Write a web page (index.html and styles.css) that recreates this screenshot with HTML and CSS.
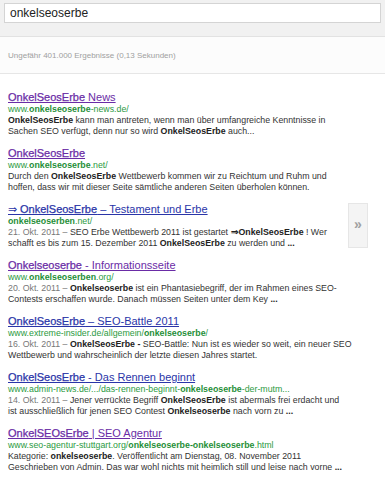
FILE: index.html
```html
<!DOCTYPE html>
<html lang="de">
<head>
<meta charset="utf-8">
<title>onkelseoserbe - Suche</title>
<link rel="stylesheet" href="styles.css">
</head>
<body>
<header class="searchbar">
  <div class="searchbox">onkelseoserbe</div>
</header>
<div class="stats">Ungefähr 401.000 Ergebnisse (0,13 Sekunden)</div>
<main class="results">
  <div class="result">
    <a class="title visited" href="#"><b>OnkelSeosErbe</b> News</a>
    <div class="url">www.<b>onkelseoserbe</b>-news.de/</div>
    <div class="snippet"><b>OnkelSeosErbe</b> kann man antreten, wenn man über umfangreiche Kenntnisse in<br>Sachen SEO verfügt, denn nur so wird <b>OnkelSeosErbe</b> auch...</div>
  </div>
  <div class="result">
    <a class="title visited" href="#"><b>OnkelSeosErbe</b></a>
    <div class="url">www.<b>onkelseoserbe</b>.net/</div>
    <div class="snippet">Durch den <b>OnkelSeosErbe</b> Wettbewerb kommen wir zu Reichtum und Ruhm und<br>hoffen, dass wir mit dieser Seite sämtliche anderen Seiten überholen können.</div>
  </div>
  <div class="result with-more">
    <div class="result-body">
      <a class="title" href="#">⇒ <b>OnkelSeosErbe</b> – Testament und Erbe</a>
      <div class="url"><b>onkelseoserben</b>.net/</div>
      <div class="snippet"><span class="date">21. Okt. 2011 – </span>SEO Erbe Wettbewerb 2011 ist gestartet <b>⇒OnkelSeosErbe</b> ! Wer<br>schafft es bis zum 15. Dezember 2011 <b>OnkelSeosErbe</b> zu werden und <b>...</b></div>
    </div>
    <div class="more">»</div>
  </div>
  <div class="result">
    <a class="title visited" href="#"><b>Onkelseoserbe</b> - Informationsseite</a>
    <div class="url">www.<b>onkelseoserben</b>.org/</div>
    <div class="snippet"><span class="date">20. Okt. 2011 – </span><b>Onkelseoserbe</b> ist ein Phantasiebegriff, der im Rahmen eines SEO-<br>Contests erschaffen wurde. Danach müssen Seiten unter dem Key <b>...</b></div>
  </div>
  <div class="result">
    <a class="title" href="#"><b>OnkelSeosErbe</b> – SEO-Battle 2011</a>
    <div class="url">www.extreme-insider.de/allgemein/<b>onkelseoserbe</b>/</div>
    <div class="snippet"><span class="date">16. Okt. 2011 – </span><b>OnkelSeosErbe -</b> SEO-Battle: Nun ist es wieder so weit, ein neuer SEO<br>Wettbewerb und wahrscheinlich der letzte diesen Jahres startet.</div>
  </div>
  <div class="result">
    <a class="title" href="#"><b>OnkelSeosErbe</b> - Das Rennen beginnt</a>
    <div class="url">www.admin-news.de/.../das-rennen-beginnt-<b>onkelseoserbe</b>-der-mutm...</div>
    <div class="snippet"><span class="date">14. Okt. 2011 – </span>Jener verrückte Begriff <b>OnkelSeosErbe</b> ist abermals frei erdacht und<br>ist ausschließlich für jenen SEO Contest <b>Onkelseoserbe</b> nach vorn zu <b>...</b></div>
  </div>
  <div class="result">
    <a class="title visited" href="#"><b>OnkelSEOsErbe</b> | SEO Agentur</a>
    <div class="url">www.seo-agentur-stuttgart.org/<b>onkelseoserbe-onkelseoserbe</b>.html</div>
    <div class="snippet">Kategorie: <b>onkelseoserbe</b>. Veröffentlicht am Dienstag, 08. November 2011<br>Geschrieben von Admin. Das war wohl nichts mit heimlich still und leise nach vorne <b>...</b></div>
  </div>
</main>
</body>
</html>
```

FILE: styles.css
```css
html, body {
  margin: 0;
  padding: 0;
  background: #fff;
  font-family: "Liberation Sans", Arial, sans-serif;
  overflow: hidden;
}

.searchbar {
  background: #f1f1f1;
  height: 37px;
  padding: 3px 4px 0 4px;
  box-sizing: border-box;
  border-bottom: 1px solid #e2e2e2;
}

.searchbox {
  background: #fff;
  border: 1px solid #d4d4d4;
  height: 20px;
  box-sizing: border-box;
  padding-left: 5px;
  font-size: 12px;
  line-height: 18px;
  color: #222;
}

.stats {
  height: 37px;
  box-sizing: border-box;
  border-bottom: 1px solid #e6e6e6;
  padding: 2px 0 0 8px;
  font-size: 8px;
  line-height: 34px;
  color: #a0a0a0;
  background: #fcfcfc;
}

.results {
  padding: 17px 0 0 8px;
}

.result {
  margin-bottom: 10px;
}

.with-more {
  display: flex;
  align-items: flex-start;
}

.result-body {
  flex: 1;
}

.more {
  width: 20px;
  height: 45px;
  margin-right: 17px;
  box-sizing: border-box;
  background: #f4f4f4;
  border: 1px solid #e6e6e6;
  color: #a0a0a0;
  font-size: 14px;
  font-weight: bold;
  line-height: 41px;
  text-align: center;
}

.title {
  display: block;
  font-size: 11px;
  line-height: 13px;
  color: #2a35a8;
  text-decoration: underline;
  white-space: nowrap;
}

.title b {
  font-weight: normal;
  -webkit-text-stroke: 0.25px currentColor;
}

.title.visited {
  color: #6a2ca6;
}

.url {
  font-size: 8.8px;
  line-height: 11px;
  color: #2b9a42;
  white-space: nowrap;
}

.url b {
  color: #1f8f38;
}

.snippet {
  font-size: 8.8px;
  line-height: 11px;
  color: #333;
  white-space: nowrap;
}

.snippet b {
  color: #222;
}

.date {
  color: #777;
}
```
